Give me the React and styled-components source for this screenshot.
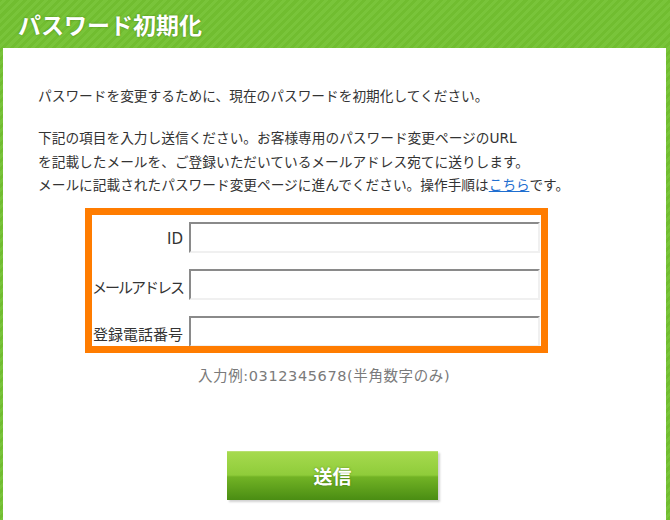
import styled, { createGlobalStyle } from 'styled-components';

const GlobalStyle = createGlobalStyle`
	html, body {
		margin: 0;
		padding: 0;
		background: #ffffff;
	}
	body {
		font-family: "DejaVu Sans", "Noto Sans CJK JP", sans-serif;
		color: #333333;
	}
`;

const stripes = `repeating-linear-gradient(
	-45deg,
	#71bd30 0px,
	#71bd30 3px,
	#79c43a 3px,
	#79c43a 6px
)`;

// kana labels are narrower in the original font, so squeeze them a bit
const fields = [
	{ id: 'id', label: 'ID' },
	{ id: 'mail', label: 'メールアドレス', tight: true },
	{ id: 'tel', label: '登録電話番号' },
];

function App() {
	return (
		<Page>
			<GlobalStyle />
			<Header>
				<Title>パスワード初期化</Title>
			</Header>
			<Panel>
				<Text>パスワードを変更するために、現在のパスワードを初期化してください。</Text>
				<Text>
					下記の項目を入力し送信ください。お客様専用のパスワード変更ページのURL
					<br />
					を記載したメールを、ご登録いただいているメールアドレス宛てに送りします。
					<br />
					メールに記載されたパスワード変更ページに進んでください。操作手順は
					<Link href="#">こちら</Link>です。
				</Text>
				<FormBox>
					{fields.map((f) => (
						<Row key={f.id}>
							<Label htmlFor={f.id} $tight={f.tight}>
								{f.label}
							</Label>
							<Input id={f.id} type="text" />
						</Row>
					))}
				</FormBox>
				<Hint>入力例:0312345678(半角数字のみ)</Hint>
				<ButtonRow>
					<SubmitButton type="button">送信</SubmitButton>
				</ButtonRow>
			</Panel>
		</Page>
	);
}

export default App;

const Page = styled.div`
	width: 670px;
	height: 520px;
	display: flex;
	flex-direction: column;
	background: ${stripes};
	overflow: hidden;
`;

const Header = styled.div`
	height: 48px;
	display: flex;
	align-items: center;
	padding-left: 18px;
	flex-shrink: 0;
`;

const Title = styled.h1`
	margin: 0;
	font-family: "Noto Sans CJK JP", sans-serif;
	font-size: 23px;
	font-weight: bold;
	color: #ffffff;
	text-shadow: 0 0 2px rgba(40, 90, 0, 0.6);
	line-height: 1;
`;

const Panel = styled.div`
	flex: 1;
	margin: 0 4px 0 3px;
	background: #ffffff;
	padding: 37px 0 0 35px;
`;

const Text = styled.p`
	margin: 0 0 18.5px;
	font-size: 13.7px;
	line-height: 23.5px;
	color: #333333;
	white-space: nowrap;
`;

const Link = styled.a`
	color: #1f6fd0;
	text-decoration: underline;
`;

const FormBox = styled.div`
	box-sizing: border-box;
	margin: -8px 0 0 47px;
	width: 463px;
	height: 145px;
	border: 7px solid #ff7c00;
	padding: 7px 1px 0 0;
	display: flex;
	flex-direction: column;
	gap: 16px;
	overflow: hidden;
`;

const Row = styled.div`
	display: flex;
	align-items: center;
	gap: 6px;
	flex-shrink: 0;
`;

const Label = styled.label`
	width: 91px;
	text-align: right;
	font-size: 15px;
	letter-spacing: ${(p) => (p.$tight ? '-2px' : '0')};
	color: #333333;
	padding-top: 3px;
	white-space: nowrap;
`;

const Input = styled.input`
	flex: 1;
	height: 31px;
	box-sizing: border-box;
	border-style: solid;
	border-width: 2px;
	border-color: #8a8a8a #f0f0f0 #f0f0f0 #8a8a8a;
	background: #ffffff;
	padding: 0 6px;
	font-size: 14px;
	outline: none;
`;

const Hint = styled.div`
	margin: 12px 0 0 160px;
	font-size: 14.5px;
	letter-spacing: 0.6px;
	line-height: 23.5px;
	color: #7a7a7a;
	white-space: nowrap;
`;

const ButtonRow = styled.div`
	display: flex;
	justify-content: center;
	padding-right: 39px;
	margin-top: 62px;
`;

const SubmitButton = styled.button`
	width: 211px;
	height: 49px;
	border: none;
	border-top: 1px solid #b8e070;
	background: linear-gradient(
		to bottom,
		#a6da4e 0%,
		#8fcc3a 48%,
		#72b325 52%,
		#4a8d13 100%
	);
	box-shadow: 2px 2px 2px rgba(0, 0, 0, 0.18);
	color: #ffffff;
	font-family: "Noto Sans CJK JP", sans-serif;
	font-size: 19px;
	font-weight: bold;
	text-shadow: 0 0 2px rgba(40, 80, 0, 0.6);
	cursor: pointer;
`;
